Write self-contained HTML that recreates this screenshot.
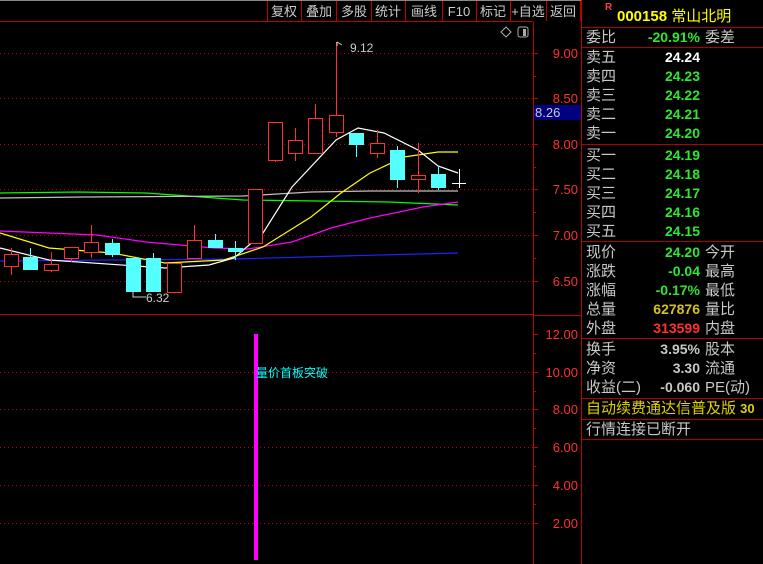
<!DOCTYPE html>
<html><head><meta charset="utf-8"><style>
body{margin:0;background:#000;width:763px;height:564px;overflow:hidden;position:relative;font-family:"Liberation Sans","WenQuanYi Zen Hei","Noto Sans CJK SC",sans-serif}
.t{position:absolute;white-space:nowrap}
.p{position:absolute;left:582px;width:181px;font-size:15px;color:#c8c8c8}
.r{position:absolute;height:19px;line-height:19px;left:4px;right:0}
.r .a{position:absolute;left:0}
.r .b{position:absolute;right:63px;font-family:"Liberation Sans",sans-serif;font-weight:bold;font-size:14px}
.r .c{position:absolute;left:119px}
.hl{position:absolute;left:582px;width:181px;height:1px;background:#b00000}
.g{color:#2ee82e}.w{color:#fff}.y{color:#d4c020}.rd{color:#ff3030}.gr{color:#c8c8c8}
</style></head><body>
<svg width="763" height="564" style="position:absolute;left:0;top:0" font-family="Liberation Sans, WenQuanYi Zen Hei, sans-serif">
<line x1="0" y1="0.5" x2="582" y2="0.5" stroke="#888"/>
<line x1="0" y1="21.5" x2="533" y2="21.5" stroke="#c00000"/>
<g stroke="#c00000">
<line x1="267.5" y1="1" x2="267.5" y2="21"/><line x1="301.5" y1="1" x2="301.5" y2="21"/><line x1="336.5" y1="1" x2="336.5" y2="21"/><line x1="371.5" y1="1" x2="371.5" y2="21"/><line x1="405.5" y1="1" x2="405.5" y2="21"/><line x1="442.5" y1="1" x2="442.5" y2="21"/><line x1="476.5" y1="1" x2="476.5" y2="21"/><line x1="510.5" y1="1" x2="510.5" y2="21"/><line x1="546.5" y1="1" x2="546.5" y2="21"/><line x1="580.5" y1="1" x2="580.5" y2="21"/>
</g>
<g fill="#ccc" font-size="13" text-anchor="middle">
<text x="284" y="16">复权</text><text x="319" y="16">叠加</text><text x="354" y="16">多股</text><text x="388" y="16">统计</text><text x="424" y="16">画线</text><text x="459" y="16">F10</text><text x="493" y="16">标记</text><text x="528" y="16">+自选</text><text x="563" y="16">返回</text>
</g>
<path d="M506 27 L511 32 L506 37 L501 32Z" fill="none" stroke="#aaa"/>
<rect x="518" y="27" width="10" height="10" rx="2" fill="none" stroke="#aaa"/><rect x="523" y="29" width="3" height="7" fill="#aaa"/>
<line x1="533.5" y1="22" x2="533.5" y2="564" stroke="#c00000"/>
<line x1="581.5" y1="0" x2="581.5" y2="564" stroke="#c00000"/>
<line x1="0" y1="314.5" x2="533" y2="314.5" stroke="#c00000"/>
<line x1="533" y1="315.5" x2="582" y2="315.5" stroke="#c00000"/>
<g stroke="#c00000" stroke-dasharray="1,3">
<line x1="0" y1="53.5" x2="533" y2="53.5"/><line x1="0" y1="98.5" x2="533" y2="98.5"/><line x1="0" y1="144.5" x2="533" y2="144.5"/><line x1="0" y1="189.5" x2="533" y2="189.5"/><line x1="0" y1="235.5" x2="533" y2="235.5"/><line x1="0" y1="281.5" x2="533" y2="281.5"/>
<line x1="0" y1="372.5" x2="533" y2="372.5"/><line x1="0" y1="409.5" x2="533" y2="409.5"/><line x1="0" y1="447.5" x2="533" y2="447.5"/><line x1="0" y1="485.5" x2="533" y2="485.5"/><line x1="0" y1="523.5" x2="533" y2="523.5"/>
</g>
<g stroke="#c00000">
<line x1="534" y1="53.5" x2="538" y2="53.5"/><line x1="534" y1="76.5" x2="536" y2="76.5"/><line x1="534" y1="98.5" x2="538" y2="98.5"/><line x1="534" y1="144.5" x2="538" y2="144.5"/><line x1="534" y1="167.5" x2="536" y2="167.5"/><line x1="534" y1="189.5" x2="538" y2="189.5"/><line x1="534" y1="212.5" x2="536" y2="212.5"/><line x1="534" y1="235.5" x2="538" y2="235.5"/><line x1="534" y1="258.5" x2="536" y2="258.5"/><line x1="534" y1="281.5" x2="538" y2="281.5"/>
<line x1="534" y1="334.5" x2="538" y2="334.5"/><line x1="534" y1="353.5" x2="536" y2="353.5"/><line x1="534" y1="372.5" x2="538" y2="372.5"/><line x1="534" y1="391.5" x2="536" y2="391.5"/><line x1="534" y1="409.5" x2="538" y2="409.5"/><line x1="534" y1="428.5" x2="536" y2="428.5"/><line x1="534" y1="447.5" x2="538" y2="447.5"/><line x1="534" y1="466.5" x2="536" y2="466.5"/><line x1="534" y1="485.5" x2="538" y2="485.5"/><line x1="534" y1="504.5" x2="536" y2="504.5"/><line x1="534" y1="523.5" x2="538" y2="523.5"/>
</g>
<g fill="#ff3030" font-size="13" text-anchor="end">
<text x="578" y="58">9.00</text><text x="578" y="103">8.50</text><text x="578" y="149">8.00</text><text x="578" y="194">7.50</text><text x="578" y="240">7.00</text><text x="578" y="286">6.50</text>
<text x="578" y="339">12.00</text><text x="578" y="377">10.00</text><text x="578" y="414">8.00</text><text x="578" y="452">6.00</text><text x="578" y="490">4.00</text><text x="578" y="528">2.00</text>
</g>
<rect x="534" y="105" width="47" height="15" fill="#000080"/>
<text x="535" y="117" fill="#ccc" font-size="13">8.26</text>
<g fill="none" stroke-width="1.2">
<polyline stroke="#00ff00" points="0,193 78,192 146,193 243,200 389,202 458,205"/>
<polyline stroke="#c0c0c0" points="0,198 83,197 243,196 311,192 370,191 458,191"/>
<polyline stroke="#2020ff" points="0,261 234,259 341,256 458,253"/>
<polyline stroke="#ff00ff" points="0,231 97,235 146,242 214,248 248,249 292,242 331,228 370,218 423,207 458,202"/>
<polyline stroke="#ffff00" points="0,233 49,248 112,253 165,263 224,260 263,247 311,217 341,193 370,173 404,157 438,152 458,152"/>
<polyline stroke="#ffffff" points="0,248 49,260 165,268 209,265 234,258 263,233 292,187 336,140 358,128 384,133 418,150 438,166 458,173"/>
</g>
<g stroke="#ff3030" fill="#000">
<line x1="11.5" y1="248" x2="11.5" y2="275"/><rect x="4.5" y="254.5" width="14" height="12"/>
<line x1="51.5" y1="252" x2="51.5" y2="272"/><rect x="44.5" y="264.5" width="14" height="6"/>
<line x1="71.5" y1="247" x2="71.5" y2="262"/><rect x="64.5" y="247.5" width="14" height="11"/>
<line x1="91.5" y1="225" x2="91.5" y2="258"/><rect x="84.5" y="242.5" width="14" height="10"/>
<rect x="167.5" y="263.5" width="14" height="29"/>
<line x1="194.5" y1="225" x2="194.5" y2="258"/><rect x="187.5" y="240.5" width="14" height="18"/>
<rect x="248.5" y="189.5" width="14" height="54"/>
<line x1="275.5" y1="122" x2="275.5" y2="162"/><rect x="268.5" y="122.5" width="14" height="38"/>
<line x1="295.5" y1="128" x2="295.5" y2="161"/><rect x="288.5" y="140.5" width="14" height="13"/>
<line x1="315.5" y1="104" x2="315.5" y2="153"/><rect x="308.5" y="118.5" width="14" height="35"/>
<line x1="336.5" y1="42" x2="336.5" y2="137"/><rect x="329.5" y="115.5" width="14" height="17"/>
<line x1="377.5" y1="130" x2="377.5" y2="158"/><rect x="370.5" y="143.5" width="14" height="10"/>
<line x1="418.5" y1="143" x2="418.5" y2="193"/><rect x="411.5" y="175.5" width="14" height="4"/>
</g>
<g stroke="#5ff" fill="#5ff">
<line x1="30.5" y1="248" x2="30.5" y2="269"/><rect x="23.5" y="257.5" width="14" height="12"/>
<line x1="112.5" y1="239" x2="112.5" y2="257"/><rect x="105.5" y="243.5" width="14" height="11"/>
<rect x="126.5" y="258.5" width="14" height="33"/>
<line x1="153.5" y1="253" x2="153.5" y2="291"/><rect x="146.5" y="258.5" width="14" height="33"/>
<line x1="215.5" y1="234" x2="215.5" y2="247"/><rect x="208.5" y="240.5" width="14" height="7"/>
<line x1="235.5" y1="241" x2="235.5" y2="260"/><rect x="228.5" y="248.5" width="14" height="3"/>
<line x1="356.5" y1="133" x2="356.5" y2="157"/><rect x="349.5" y="133.5" width="14" height="11"/>
<line x1="397.5" y1="146" x2="397.5" y2="188"/><rect x="390.5" y="150.5" width="14" height="29"/>
<line x1="438.5" y1="166" x2="438.5" y2="190"/><rect x="431.5" y="174.5" width="14" height="13"/>
</g>
<line x1="459.5" y1="169" x2="459.5" y2="188" stroke="#fff"/><line x1="452" y1="183.5" x2="466" y2="183.5" stroke="#fff"/>
<path d="M337 42 L342 45 M337 42 L337 46" stroke="#ccc" fill="none"/>
<text x="350" y="52" fill="#ccc" font-size="12">9.12</text>
<path d="M133 292 L133 297 L146 297" stroke="#ccc" fill="none"/>
<text x="146" y="302" fill="#ccc" font-size="12">6.32</text>
<rect x="254" y="334" width="4" height="226" fill="#ff00ff"/>
<text x="256" y="377" fill="#00ffff" font-size="12">量价首板突破</text>
</svg>
<div class="p" style="top:0;height:28px"><span class="t" style="left:23px;top:2px;color:#ff4040;font-size:10px;font-weight:bold">R</span><span class="t" style="left:35px;top:5px;color:#ffff00;font-size:15px"><b style="font-family:'Liberation Sans'">000158</b> 常山北明</span></div>
<div class="hl" style="top:27px"></div>
<div class="p" style="top:28px"><div class="r"><span class="a">委比</span><span class="b g">-20.91%</span><span class="c">委差</span></div></div>
<div class="hl" style="top:47px"></div>
<div class="p" style="top:48px">
<div class="r" style="top:0"><span class="a">卖五</span><span class="b w">24.24</span></div>
<div class="r" style="top:19px"><span class="a">卖四</span><span class="b g">24.23</span></div>
<div class="r" style="top:38px"><span class="a">卖三</span><span class="b g">24.22</span></div>
<div class="r" style="top:57px"><span class="a">卖二</span><span class="b g">24.21</span></div>
<div class="r" style="top:76px"><span class="a">卖一</span><span class="b g">24.20</span></div>
</div>
<div class="hl" style="top:144px"></div>
<div class="p" style="top:146px">
<div class="r" style="top:0"><span class="a">买一</span><span class="b g">24.19</span></div>
<div class="r" style="top:19px"><span class="a">买二</span><span class="b g">24.18</span></div>
<div class="r" style="top:38px"><span class="a">买三</span><span class="b g">24.17</span></div>
<div class="r" style="top:57px"><span class="a">买四</span><span class="b g">24.16</span></div>
<div class="r" style="top:76px"><span class="a">买五</span><span class="b g">24.15</span></div>
</div>
<div class="hl" style="top:241px"></div>
<div class="p" style="top:243px">
<div class="r" style="top:0"><span class="a">现价</span><span class="b g">24.20</span><span class="c">今开</span></div>
<div class="r" style="top:19px"><span class="a">涨跌</span><span class="b g">-0.04</span><span class="c">最高</span></div>
<div class="r" style="top:38px"><span class="a">涨幅</span><span class="b g">-0.17%</span><span class="c">最低</span></div>
<div class="r" style="top:57px"><span class="a">总量</span><span class="b y">627876</span><span class="c">量比</span></div>
<div class="r" style="top:76px"><span class="a">外盘</span><span class="b rd">313599</span><span class="c">内盘</span></div>
</div>
<div class="hl" style="top:338px"></div>
<div class="p" style="top:340px">
<div class="r" style="top:0"><span class="a">换手</span><span class="b gr">3.95%</span><span class="c">股本</span></div>
<div class="r" style="top:19px"><span class="a">净资</span><span class="b gr">3.30</span><span class="c">流通</span></div>
<div class="r" style="top:38px"><span class="a">收益(二)</span><span class="b gr">-0.060</span><span class="c">PE(动)</span></div>
</div>
<div class="hl" style="top:398px"></div>
<div class="p" style="top:399px;height:20px;line-height:20px;overflow:hidden"><span class="t y" style="left:4px;color:#e0d000">自动续费通达信普及版 <b style="font-family:'Liberation Sans';font-size:13px">30</b></span></div>
<div class="hl" style="top:419px"></div>
<div class="p" style="top:420px;height:19px;line-height:19px"><span class="t" style="left:4px">行情连接已断开</span></div>
<div class="hl" style="top:439px"></div>
</body></html>
